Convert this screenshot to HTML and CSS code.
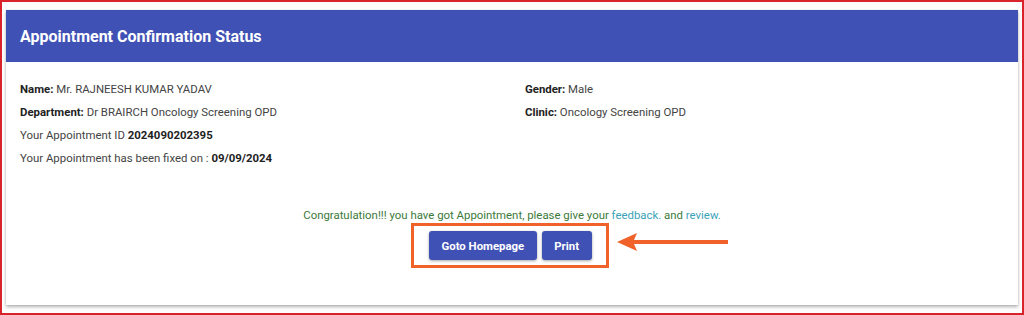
FILE: index.html
```html
<!DOCTYPE html>
<html lang="en">
<head>
<meta charset="utf-8">
<title>Appointment Confirmation Status</title>
<link rel="stylesheet" href="styles.css">
</head>
<body>
<div class="frame">
  <div class="card">
    <div class="card-header">Appointment Confirmation Status</div>
    <div class="card-body">
      <div class="details">
        <div class="col">
          <div class="row"><b>Name:</b> Mr. RAJNEESH KUMAR YADAV</div>
          <div class="row"><b>Department:</b> Dr BRAIRCH Oncology Screening OPD</div>
          <div class="row">Your Appointment ID <b class="val">2024090202395</b></div>
          <div class="row">Your Appointment has been fixed on : <b class="val">09/09/2024</b></div>
        </div>
        <div class="col">
          <div class="row"><b>Gender:</b> Male</div>
          <div class="row"><b>Clinic:</b> Oncology Screening OPD</div>
        </div>
      </div>
      <p class="congrats">Congratulation!!! you have got Appointment, please give your <a href="#" class="link">feedback.</a> and <a href="#" class="link">review.</a></p>
      <div class="actions">
        <div class="highlight">
          <button class="btn">Goto Homepage</button>
          <button class="btn">Print</button>
          <svg class="arrow" width="112" height="18" viewBox="0 0 112 18">
            <path d="M0 9 L20 0 L17 7 L111 7 L111 11 L17 11 L20 18 Z" fill="#f0622a"/>
          </svg>
        </div>
      </div>
    </div>
  </div>
</div>
</body>
</html>
```
FILE: styles.css
```css
* { box-sizing: border-box; }
html, body { margin: 0; padding: 0; background: #fff; }
body { font-family: Roboto, "Noto Sans", Arial, sans-serif; }

.frame {
  width: 1024px;
  height: 315px;
  border: 2px solid #d8232a;
  padding: 8px 4px 8px 4px;
  background: #fdfdfd;
}

.card {
  height: 100%;
  background: #fff;
  box-shadow: 0 2px 3px rgba(0,0,0,0.28), 0 0 1px rgba(0,0,0,0.2);
  display: flex;
  flex-direction: column;
}

.card-header {
  height: 52px;
  background: #3f51b5;
  color: #fff;
  font-size: 16px;
  font-weight: 700;
  display: flex;
  align-items: center;
  padding-left: 14px;
  padding-top: 1px;
}

.card-body {
  padding: 16px 14px 0 14px;
}

.details {
  display: grid;
  grid-template-columns: 505px 1fr;
}

.row {
  font-size: 11.4px;
  line-height: 23px;
  color: #444;
}
.row b { color: #222; font-weight: 700; }

.congrats {
  margin: 37px 0 0 0;
  text-align: center;
  font-size: 11.4px;
  line-height: 16px;
  color: #3c7a3a;
}
.link { color: #3ba3b8; text-decoration: none; }

.actions {
  display: flex;
  justify-content: center;
  padding-right: 4px;
}

.highlight {
  position: relative;
  border: 3.5px solid #f0622a;
  padding: 5px 14px 5px 14.5px;
  display: flex;
  gap: 5px;
}

.btn {
  height: 29px;
  border: none;
  border-radius: 3px;
  background: #3f51b5;
  color: #fff;
  font-family: Roboto, "Noto Sans", Arial, sans-serif;
  font-size: 11.4px;
  font-weight: 700;
  padding: 0 12.5px;
  box-shadow: 0 1px 3px rgba(0,0,0,0.35);
}

.arrow {
  position: absolute;
  left: 203px;
  top: 6.5px;
}
```
